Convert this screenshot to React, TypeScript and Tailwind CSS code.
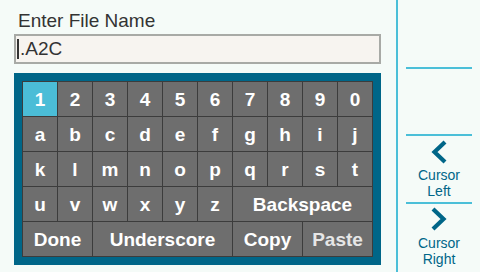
import React from "react";

const rows1 = ["1","2","3","4","5","6","7","8","9","0"];
const rows2 = ["a","b","c","d","e","f","g","h","i","j"];
const rows3 = ["k","l","m","n","o","p","q","r","s","t"];
const rows4 = ["u","v","w","x","y","z"];

function Key({ label, span = 1, active = false, dim = false }: { label: string; span?: number; active?: boolean; dim?: boolean }) {
  const spanCls = span === 2 ? "col-span-2" : span === 4 ? "col-span-4" : "";
  return (
    <div
      className={`${spanCls} flex items-center justify-center font-bold text-[19px] leading-none ${active ? "bg-[#4bbdd7]" : "bg-[#6e6e6e]"} ${dim ? "text-[#e6e6e6]" : "text-white"}`}
    >
      {label}
    </div>
  );
}

export default function App() {
  return (
    <div
      className="w-[480px] h-[272px] bg-[#f5fbf8] flex overflow-hidden"
      style={{ fontFamily: '"Liberation Sans", Arial, sans-serif' }}
    >
      <div className="w-[396px] flex flex-col pl-[14px]">
        <div className="pt-[10px] pl-[4px] text-[19px] leading-[22px] text-[#333333]">Enter File Name</div>
        <div className="mt-[2px] w-[367px] h-[30px] border-2 border-[#a8aaa6] bg-[#f7f4f0] flex items-center pl-[1px]">
          <div className="w-[2px] h-[20px] bg-[#333333]" />
          <span className="ml-[1px] text-[19px] leading-[22px] text-[#333333]">.A2C</span>
        </div>
        <div className="mt-[9px] w-[367px] bg-[#006688] p-[8px]">
          <div className="grid grid-cols-[repeat(10,34px)] grid-rows-[repeat(5,34px)] gap-px p-px bg-[#3c3c3c] w-[351px]">
            {rows1.map((k, i) => <Key key={k} label={k} active={i === 0} />)}
            {rows2.map((k) => <Key key={k} label={k} />)}
            {rows3.map((k) => <Key key={k} label={k} />)}
            {rows4.map((k) => <Key key={k} label={k} />)}
            <Key label="Backspace" span={4} />
            <Key label="Done" span={2} />
            <Key label="Underscore" span={4} />
            <Key label="Copy" span={2} />
            <Key label="Paste" span={2} dim />
          </div>
        </div>
      </div>
      <div className="w-[2px] h-full bg-[#4bbfd8]" />
      <div className="w-[82px] flex flex-col">
        <div className="h-[67px]" />
        <div className="h-[2px] mx-[8px] bg-[#4bbfd8]" />
        <div className="h-[65px]" />
        <div className="h-[2px] mx-[8px] bg-[#4bbfd8]" />
        <div className="h-[66px] flex flex-col items-center pt-[4px] text-[#006688]">
          <svg width="16" height="24" viewBox="0 0 16 24">
            <path d="M14 2 L3.5 12 L14 22" fill="none" stroke="#006688" strokeWidth="4.2" strokeLinejoin="miter" />
          </svg>
          <div className="mt-[3px] text-[14px] leading-[16px] text-center">Cursor<br />Left</div>
        </div>
        <div className="h-[2px] mx-[8px] bg-[#4bbfd8]" />
        <div className="flex-1 flex flex-col items-center pt-[3px] text-[#006688]">
          <svg width="16" height="24" viewBox="0 0 16 24">
            <path d="M2 2 L12.5 12 L2 22" fill="none" stroke="#006688" strokeWidth="4.2" strokeLinejoin="miter" />
          </svg>
          <div className="mt-[4px] text-[14px] leading-[16px] text-center">Cursor<br />Right</div>
        </div>
      </div>
    </div>
  );
}
